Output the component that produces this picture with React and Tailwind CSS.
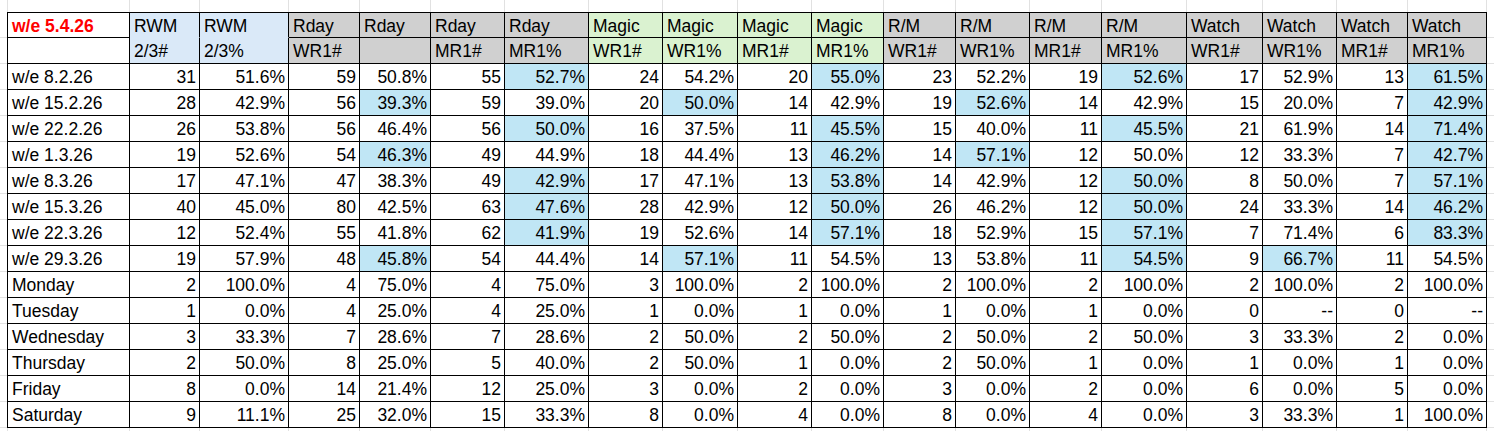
import React from 'react';

// column widths (the row wrapper carries the left border)
const widths = [
  'w-[122px]', 'w-[70px]', 'w-[89px]', 'w-[71px]', 'w-[71px]', 'w-[74px]', 'w-[84px]',
  'w-[74px]', 'w-[75px]', 'w-[74px]', 'w-[72px]', 'w-[72px]', 'w-[74px]', 'w-[72px]',
  'w-[85px]', 'w-[76px]', 'w-[74px]', 'w-[71px]', 'w-[79px]',
];

const headBg = [
  'bg-white',
  'bg-[#dae9f8]', 'bg-[#dae9f8]',
  'bg-[#d0d0d0]', 'bg-[#d0d0d0]', 'bg-[#d0d0d0]', 'bg-[#d0d0d0]',
  'bg-[#daf2d0]', 'bg-[#daf2d0]', 'bg-[#daf2d0]', 'bg-[#daf2d0]',
  'bg-[#d0d0d0]', 'bg-[#d0d0d0]', 'bg-[#d0d0d0]', 'bg-[#d0d0d0]',
  'bg-[#d0d0d0]', 'bg-[#d0d0d0]', 'bg-[#d0d0d0]', 'bg-[#d0d0d0]',
];

const head1 = ['w/e 5.4.26', 'RWM', 'RWM', 'Rday', 'Rday', 'Rday', 'Rday', 'Magic', 'Magic', 'Magic', 'Magic',
  'R/M', 'R/M', 'R/M', 'R/M', 'Watch', 'Watch', 'Watch', 'Watch'];
const head2 = ['', '2/3#', '2/3%', 'WR1#', '', 'MR1#', 'MR1%', 'WR1#', 'WR1%', 'MR1#', 'MR1%',
  'WR1#', 'WR1%', 'MR1#', 'MR1%', 'WR1#', 'WR1%', 'MR1#', 'MR1%'];

// a trailing * marks a highlighted cell
const rows = [
  ['w/e 8.2.26', '31', '51.6%', '59', '50.8%', '55', '52.7%*', '24', '54.2%', '20', '55.0%*', '23', '52.2%', '19', '52.6%*', '17', '52.9%', '13', '61.5%*'],
  ['w/e 15.2.26', '28', '42.9%', '56', '39.3%*', '59', '39.0%', '20', '50.0%*', '14', '42.9%', '19', '52.6%*', '14', '42.9%', '15', '20.0%', '7', '42.9%*'],
  ['w/e 22.2.26', '26', '53.8%', '56', '46.4%', '56', '50.0%*', '16', '37.5%', '11', '45.5%*', '15', '40.0%', '11', '45.5%*', '21', '61.9%', '14', '71.4%*'],
  ['w/e 1.3.26', '19', '52.6%', '54', '46.3%*', '49', '44.9%', '18', '44.4%', '13', '46.2%*', '14', '57.1%*', '12', '50.0%', '12', '33.3%', '7', '42.7%*'],
  ['w/e 8.3.26', '17', '47.1%', '47', '38.3%', '49', '42.9%*', '17', '47.1%', '13', '53.8%*', '14', '42.9%', '12', '50.0%*', '8', '50.0%', '7', '57.1%*'],
  ['w/e 15.3.26', '40', '45.0%', '80', '42.5%', '63', '47.6%*', '28', '42.9%', '12', '50.0%*', '26', '46.2%', '12', '50.0%*', '24', '33.3%', '14', '46.2%*'],
  ['w/e 22.3.26', '12', '52.4%', '55', '41.8%', '62', '41.9%*', '19', '52.6%', '14', '57.1%*', '18', '52.9%', '15', '57.1%*', '7', '71.4%', '6', '83.3%*'],
  ['w/e 29.3.26', '19', '57.9%', '48', '45.8%*', '54', '44.4%', '14', '57.1%*', '11', '54.5%', '13', '53.8%', '11', '54.5%*', '9', '66.7%*', '11', '54.5%'],
  ['Monday', '2', '100.0%', '4', '75.0%', '4', '75.0%', '3', '100.0%', '2', '100.0%', '2', '100.0%', '2', '100.0%', '2', '100.0%', '2', '100.0%'],
  ['Tuesday', '1', '0.0%', '4', '25.0%', '4', '25.0%', '1', '0.0%', '1', '0.0%', '1', '0.0%', '1', '0.0%', '0', '--', '0', '--'],
  ['Wednesday', '3', '33.3%', '7', '28.6%', '7', '28.6%', '2', '50.0%', '2', '50.0%', '2', '50.0%', '2', '50.0%', '3', '33.3%', '2', '0.0%'],
  ['Thursday', '2', '50.0%', '8', '25.0%', '5', '40.0%', '2', '50.0%', '1', '0.0%', '2', '50.0%', '1', '0.0%', '1', '0.0%', '1', '0.0%'],
  ['Friday', '8', '0.0%', '14', '21.4%', '12', '25.0%', '3', '0.0%', '2', '0.0%', '3', '0.0%', '2', '0.0%', '6', '0.0%', '5', '0.0%'],
  ['Saturday', '9', '11.1%', '25', '32.0%', '15', '33.3%', '8', '0.0%', '4', '0.0%', '8', '0.0%', '4', '0.0%', '3', '33.3%', '1', '100.0%'],
];

const GridStrip = ({ h }) => (
  <div className={`flex ${h}`}>
    <div className="w-[7px] shrink-0" />
    <div className="flex border-l border-[#e1e1e1]">
      {widths.map((w, i) => (
        <div key={i} className={`${w} shrink-0 border-r border-[#e1e1e1]`} />
      ))}
    </div>
    <div className="flex-1" />
  </div>
);

const Row = ({ children, top }) => (
  <div className="flex h-[26px]">
    <div className="w-[7px] shrink-0 border-b border-[#e1e1e1]" />
    <div className={`flex border-l border-black ${top ? 'border-t' : ''}`}>{children}</div>
    <div className="flex-1 border-b border-[#e1e1e1]" />
  </div>
);

const App = () => {
  return (
    <div
      className="w-[1494px] h-[431px] overflow-hidden bg-white text-black text-[17.5px] leading-[27px]"
      style={{ fontFamily: '"Liberation Sans", Arial, sans-serif' }}
    >
      <GridStrip h="h-[12px]" />

      <Row top>
        {head1.map((t, i) => (
          <div
            key={i}
            className={`${widths[i]} shrink-0 border-r border-b border-black ${i === 1 || i === 2 ? 'border-b-[#dae9f8]' : ''} ${headBg[i]} pl-[4px] leading-[26px] whitespace-nowrap overflow-hidden ${i === 0 ? 'text-[#ff0000] font-bold' : ''}`}
          >
            {t}
          </div>
        ))}
      </Row>

      <Row>
        {head2.map((t, i) => (
          <div
            key={i}
            className={`${widths[i]} shrink-0 border-r border-b border-black ${headBg[i]} pl-[4px] whitespace-nowrap overflow-hidden`}
          >
            {t}
          </div>
        ))}
      </Row>

      {rows.map((r, ri) => (
        <Row key={ri}>
          {r.map((v, i) => {
            const hl = v.endsWith('*');
            const txt = hl ? v.slice(0, -1) : v;
            return (
              <div
                key={i}
                className={`${widths[i]} ${i === 0 ? 'pl-[4px] text-left' : 'pr-[3px] text-right'} shrink-0 border-r border-b border-black whitespace-nowrap overflow-hidden ${hl ? 'bg-[#c0e6f5]' : 'bg-white'}`}
              >
                {txt}
              </div>
            );
          })}
        </Row>
      ))}

      <GridStrip h="h-[4px]" />
    </div>
  );
};

export default App;
